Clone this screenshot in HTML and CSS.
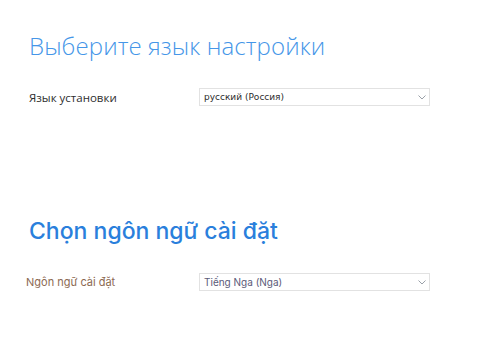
FILE: index.html
```html
<!DOCTYPE html>
<html lang="ru">
<head>
<meta charset="utf-8">
<link rel="stylesheet" href="styles.css">
</head>
<body>
<div class="page">
  <section class="block block-ru">
    <h1 class="title title-ru">Выберите язык настройки</h1>
    <div class="row">
      <span class="label label-ru">Язык установки</span>
      <div class="select select-ru">
        <span class="value">русский (Россия)</span>
        <svg class="chev" width="8" height="5" viewBox="0 0 8 5"><path d="M0.5 0.5 L4 4 L7.5 0.5" fill="none" stroke="#9aa0a8" stroke-width="1"/></svg>
      </div>
    </div>
  </section>
  <section class="block block-vi">
    <h1 class="title title-vi">Chọn ngôn ngữ cài đặt</h1>
    <div class="row">
      <span class="label label-vi">Ngôn ngữ cài đặt</span>
      <div class="select select-vi">
        <span class="value value-vi">Tiếng Nga (Nga)</span>
        <svg class="chev" width="8" height="5" viewBox="0 0 8 5"><path d="M0.5 0.5 L4 4 L7.5 0.5" fill="none" stroke="#9aa0a8" stroke-width="1"/></svg>
      </div>
    </div>
  </section>
</div>
</body>
</html>
```
FILE: styles.css
```css
html, body {
  margin: 0;
  padding: 0;
  background: #ffffff;
}
.page {
  width: 500px;
  height: 348px;
  padding: 30px 0 0 29px;
  box-sizing: border-box;
  font-family: "Open Sans", "DejaVu Sans", sans-serif;
}
.block-vi {
  margin-top: 110px;
}
.title {
  margin: 0;
  font-weight: 300;
}
.title-ru {
  font-family: "Open Sans", sans-serif;
  font-size: 24px;
  line-height: 32px;
  color: #4596e8;
  font-weight: 300;
  letter-spacing: 0.1px;
}
.title-vi {
  font-family: "Inter", "Roboto", sans-serif;
  font-size: 23px;
  line-height: 30px;
  color: #2a7fdc;
  font-weight: 500;
}
.row {
  display: flex;
  align-items: center;
  margin-top: 26px;
}
.block-vi .row {
  margin-top: 27px;
}
.label {
  width: 170px;
  font-size: 11.5px;
  color: #2e2e2e;
}
.label-ru {
  font-family: "Open Sans", sans-serif;
}
.label-vi {
  font-family: "Inter", sans-serif;
  font-size: 11px;
  color: #8c6a52;
  margin-left: -3px;
  width: 173px;
  font-weight: 400;
}
.select {
  width: 231px;
  height: 18px;
  box-sizing: border-box;
  border: 1px solid #e2e2e2;
  display: flex;
  align-items: center;
  justify-content: space-between;
  padding: 0 3px 0 4px;
}
.value {
  font-family: "DejaVu Sans", sans-serif;
  font-size: 9px;
  color: #2b2b2b;
}
.value-vi {
  font-family: "Inter", sans-serif;
  font-size: 10px;
  color: #5b5a78;
}
```
